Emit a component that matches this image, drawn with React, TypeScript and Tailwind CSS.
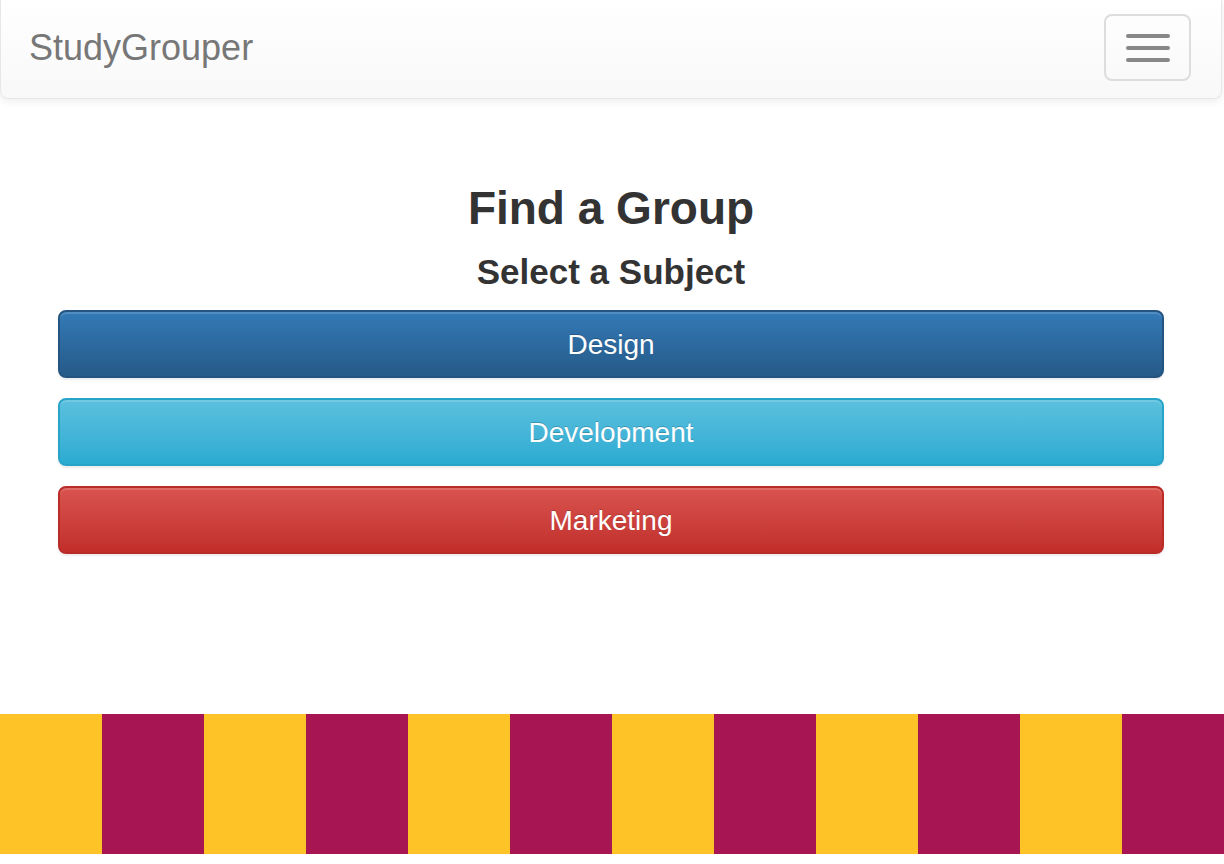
import React from 'react';

const subjects = [
  {
    name: 'Design',
    className:
      'bg-gradient-to-b from-[#337ab7] to-[#265a88] border-[#245580]',
  },
  {
    name: 'Development',
    className:
      'bg-gradient-to-b from-[#5bc0de] to-[#2aabd2] border-[#28a4c9]',
  },
  {
    name: 'Marketing',
    className:
      'bg-gradient-to-b from-[#d9534f] to-[#c12e2a] border-[#b92c28]',
  },
];

function App() {
  const stripes = Array.from({ length: 12 }, (_, i) => i);

  return (
    <div className="min-h-screen bg-white font-['Liberation_Sans',Arial,sans-serif]">
      {/* Navbar */}
      <nav className="mr-[2px] h-[99px] flex items-center justify-between pl-[28px] pr-[30px] bg-gradient-to-b from-white to-[#f8f8f8] border border-[#e7e7e7] border-t-0 rounded-b-[8px] shadow-[0_2px_8px_rgba(0,0,0,0.08)]">
        <span className="text-[36px] text-[#777] leading-none -mt-[2px]">StudyGrouper</span>
        <button className="w-[87px] h-[67px] mb-[3px] border-2 border-[#ddd] rounded-[8px] flex flex-col items-center justify-center gap-[8px]">
          <span className="block w-[44px] h-[4px] rounded-[2px] bg-[#888]" />
          <span className="block w-[44px] h-[4px] rounded-[2px] bg-[#888]" />
          <span className="block w-[44px] h-[4px] rounded-[2px] bg-[#888]" />
        </button>
      </nav>

      {/* Content */}
      <main className="pt-[86px] pl-[58px] pr-[60px]">
        <h1 className="text-center text-[46px] font-bold leading-none text-[#333]">Find a Group</h1>
        <h2 className="mt-[23px] text-center text-[35px] font-bold leading-none text-[#333]">Select a Subject</h2>
        <div className="mt-[21px] flex flex-col gap-[20px]">
          {subjects.map((s) => (
            <button
              key={s.name}
              className={`h-[68px] w-full pt-[2px] rounded-[8px] border-2 text-white text-[28px] [text-shadow:0_-1px_0_rgba(0,0,0,0.2)] shadow-[inset_0_2px_0_rgba(255,255,255,0.15),0_2px_2px_rgba(0,0,0,0.075)] ${s.className}`}
            >
              {s.name}
            </button>
          ))}
        </div>
      </main>

      {/* Stripes */}
      <div className="mt-[160px] grid grid-cols-12 h-[140px]">
        {stripes.map((i) => (
          <div key={i} className={i % 2 === 0 ? 'bg-[#fec326]' : 'bg-[#a81553]'} />
        ))}
      </div>
    </div>
  );
}

export default App;
